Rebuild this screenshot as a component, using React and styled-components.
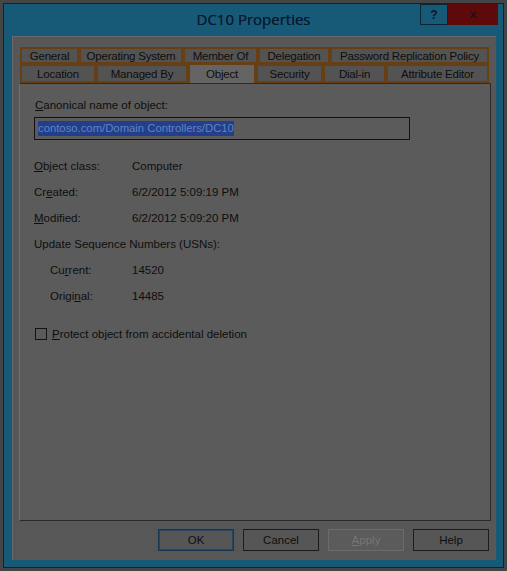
import React from "react";
import styled, { createGlobalStyle } from "styled-components";

const GlobalStyle = createGlobalStyle`
  html, body {
    margin: 0;
    padding: 0;
    background: #454545;
  }
  * {
    box-sizing: border-box;
  }
`;

const Page = styled.div`
  width: 507px;
  height: 571px;
  padding: 3px;
  background: #454545;
`;

const Window = styled.div`
  height: 100%;
  display: flex;
  flex-direction: column;
  border: 1px solid #14212a;
  background: #175a78;
`;

const TitleBar = styled.div`
  height: 32px;
  display: grid;
  grid-template-columns: 1fr auto 1fr;
  align-items: start;
`;

const Title = styled.div`
  grid-column: 2;
  padding-top: 5px;
  font-family: "Open Sans", "Noto Sans", sans-serif;
  font-size: 15px;
  color: #081a30;
  text-shadow: 0 0 0.4px #081a30;
`;

const Caption = styled.div`
  grid-column: 3;
  justify-self: end;
  display: flex;
  margin-right: 5px;
`;

const CaptionButton = styled.div`
  width: ${(p) => p.$w}px;
  height: 21px;
  display: flex;
  align-items: center;
  justify-content: center;
  background: ${(p) => (p.$close ? "#5e0a0a" : "#175a78")};
  border: ${(p) => (p.$close ? "none" : "1px solid #0b2532")};
  font-family: "Liberation Sans", Arial, sans-serif;
  font-weight: bold;
  font-size: 12px;
  color: #0c1620;
`;

const Client = styled.div`
  flex: 1;
  margin: 0 7px 7px 8px;
  padding: 10px 5px 9px 6px;
  display: flex;
  flex-direction: column;
  background: #575757;
  border-left: 1px solid #6a6a6a;
  border-top: 1px solid #6a6a6a;
`;

const TabRows = styled.div`
  display: flex;
  flex-direction: column;
  margin: 0 2px 0 1px;
`;

const TabRow = styled.div`
  display: flex;
  height: ${(p) => p.$h}px;
  align-items: flex-end;
`;

const Tab = styled.div`
  width: ${(p) => p.$w}px;
  height: ${(p) => (p.$active ? "calc(100% + 1px)" : "100%")};
  display: flex;
  align-items: center;
  justify-content: center;
  border: 2px solid #663f15;
  border-bottom: ${(p) => (p.$active ? "none" : "2px solid #663f15")};
  background: ${(p) => (p.$active ? "#646464" : "#535353")};
  font-family: "Liberation Sans", Arial, sans-serif;
  font-size: 11.5px;
  letter-spacing: -0.2px;
  color: #0e0e0e;
  white-space: nowrap;
`;

const Panel = styled.div`
  flex: 1;
  padding: 14px 14px;
  border: 1px solid #2a2a2a;
  border-left-color: #707070;
  background: #5b5b5b;
  font-family: "Liberation Sans", Arial, sans-serif;
  font-size: 11.5px;
  color: #0e0e0e;
`;

const Label = styled.div`
  line-height: 14px;
  margin-left: 1px;
`;

const Field = styled.div`
  width: 376px;
  height: 23px;
  margin-top: 5px;
  padding: 0 3px;
  display: flex;
  align-items: center;
  border: 1px solid #121212;
  background: #5b5b5b;
`;

const Selected = styled.span`
  background: #213f8c;
  color: #6482bd;
  line-height: 15px;
  font-size: 11.3px;
`;

const Rows = styled.div`
  margin-top: 13px;
  display: flex;
  flex-direction: column;
`;

const Row = styled.div`
  display: flex;
  height: 26px;
  align-items: center;
  padding-left: ${(p) => (p.$indent ? 16 : 0)}px;
`;

const Key = styled.div`
  width: ${(p) => (p.$indent ? 82 : 98)}px;
  flex-shrink: 0;
  white-space: nowrap;
`;

const Check = styled.label`
  margin-top: 19px;
  display: flex;
  align-items: center;
  gap: 5px;
`;

const Box = styled.span`
  width: 12px;
  height: 12px;
  border: 1px solid #131313;
  background: #5b5b5b;
  margin-left: 1px;
`;

const Footer = styled.div`
  margin-top: 8px;
  padding-right: 2px;
  display: flex;
  justify-content: flex-end;
  gap: 9px;
`;

const Button = styled.div`
  width: 76px;
  height: 22px;
  display: flex;
  align-items: center;
  justify-content: center;
  border: 1px solid
    ${(p) => (p.$default ? "#163552" : p.$disabled ? "#6c6c6c" : "#1c1c1c")};
  background: ${(p) => (p.$disabled ? "#5b5b5b" : "#565656")};
  box-shadow: ${(p) => (p.$default ? "inset 0 0 0 1px #284866" : "none")};
  font-family: "Liberation Sans", Arial, sans-serif;
  font-size: 11.5px;
  color: ${(p) => (p.$disabled ? "#767676" : "#0e0e0e")};
`;

const U = styled.u`
  text-underline-offset: 1px;
`;

const row1 = [
  ["General", 59],
  ["Operating System", 104],
  ["Member Of", 75],
  ["Delegation", 72],
  ["Password Replication Policy", 159],
];

const row2 = [
  ["Location", 76],
  ["Managed By", 92],
  ["Object", 68, true],
  ["Security", 67],
  ["Dial-in", 63],
  ["Attribute Editor", 103],
];

export default function App() {
  return (
    <>
      <GlobalStyle />
      <Page>
        <Window>
          <TitleBar>
            <Title>DC10 Properties</Title>
            <Caption>
              <CaptionButton $w={28}>?</CaptionButton>
              <CaptionButton $w={50} $close>
                ×
              </CaptionButton>
            </Caption>
          </TitleBar>
          <Client>
            <TabRows>
              <TabRow $h={17}>
                {row1.map(([t, w]) => (
                  <Tab key={t} $w={w}>
                    {t}
                  </Tab>
                ))}
              </TabRow>
              <TabRow $h={19}>
                {row2.map(([t, w, a]) => (
                  <Tab key={t} $w={w} $active={a}>
                    {t}
                  </Tab>
                ))}
              </TabRow>
            </TabRows>
            <Panel>
              <Label>
                <U>C</U>anonical name of object:
              </Label>
              <Field>
                <Selected>contoso.com/Domain Controllers/DC10</Selected>
              </Field>
              <Rows>
                <Row>
                  <Key>
                    <U>O</U>bject class:
                  </Key>
                  Computer
                </Row>
                <Row>
                  <Key>
                    Cr<U>e</U>ated:
                  </Key>
                  6/2/2012 5:09:19 PM
                </Row>
                <Row>
                  <Key>
                    <U>M</U>odified:
                  </Key>
                  6/2/2012 5:09:20 PM
                </Row>
                <Row>Update Sequence Numbers (USNs):</Row>
                <Row $indent>
                  <Key $indent>
                    Cu<U>r</U>rent:
                  </Key>
                  14520
                </Row>
                <Row $indent>
                  <Key $indent>
                    Origi<U>n</U>al:
                  </Key>
                  14485
                </Row>
              </Rows>
              <Check>
                <Box />
                <span>
                  <U>P</U>rotect object from accidental deletion
                </span>
              </Check>
            </Panel>
            <Footer>
              <Button $default>OK</Button>
              <Button>Cancel</Button>
              <Button $disabled>
                <U>A</U>pply
              </Button>
              <Button>Help</Button>
            </Footer>
          </Client>
        </Window>
      </Page>
    </>
  );
}
